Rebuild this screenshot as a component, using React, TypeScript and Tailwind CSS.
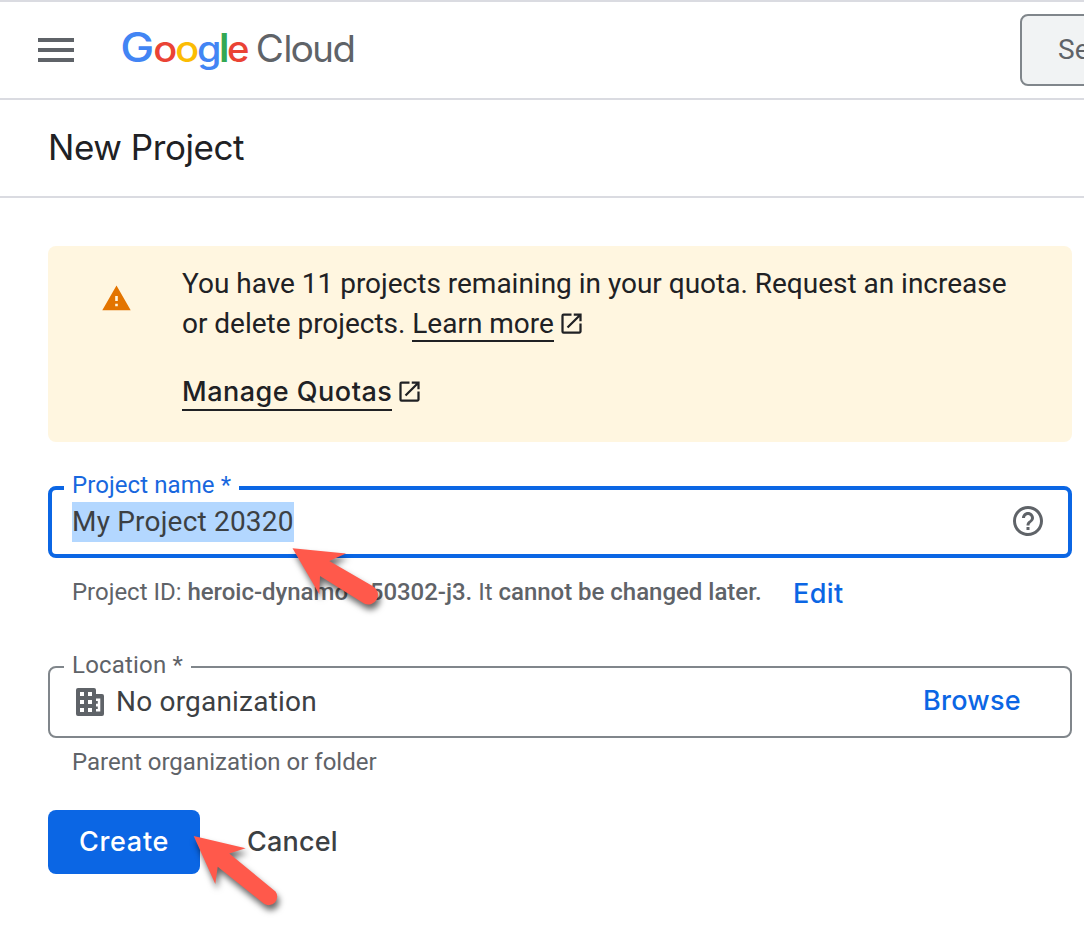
import React from "react";

function OpenInNew({ className = "" }: { className?: string }) {
  return (
    <svg viewBox="0 0 24 24" className={`inline-block h-[27px] w-[27px] ${className}`} fill="currentColor">
      <path d="M19 19H5V5h7V3H5a2 2 0 0 0-2 2v14a2 2 0 0 0 2 2h14c1.1 0 2-.9 2-2v-7h-2v7zM14 3v2h3.59l-9.83 9.83 1.41 1.41L19 6.41V10h2V3h-7z" />
    </svg>
  );
}

function Arrow({ d, className }: { d: string; className: string }) {
  return (
    <svg viewBox="0 0 100 90" className={`pointer-events-none absolute h-[90px] w-[100px] overflow-visible drop-shadow-[2px_5px_3px_rgba(0,0,0,0.6)] ${className}`}>
      <path d={d} fill="#ff594b" />
    </svg>
  );
}

function Header() {
  return (
    <header className="flex h-[100px] items-center overflow-hidden border-y-2 border-[#dadbe1] pl-[38px]">
      <div className="flex w-9 shrink-0 flex-col gap-[6px]">
        <span className="h-1 bg-[#5f6368]" />
        <span className="h-1 bg-[#5f6368]" />
        <span className="h-1 bg-[#5f6368]" />
      </div>
      <svg viewBox="0 0 240 60" className="ml-[46px] h-[60px] w-[240px] shrink-0 font-['Inter',sans-serif]">
        <g fontSize="36.500" fontWeight="500">
          <text x="0.300" y="41.500" fontSize="41" textLength="34" lengthAdjust="spacingAndGlyphs" fill="#4285f4">G</text>
          <text x="33.300" y="41.500" textLength="24" lengthAdjust="spacingAndGlyphs" fill="#ea4335">o</text>
          <text x="55.300" y="41.500" textLength="24" lengthAdjust="spacingAndGlyphs" fill="#fbbc04">o</text>
          <text x="77" y="41.500" textLength="24.500" lengthAdjust="spacingAndGlyphs" fill="#4285f4">g</text>
          <text x="98.900" y="41.500" fontSize="40" fontWeight="600" fill="#34a853">l</text>
          <text x="107" y="41.500" textLength="22.500" lengthAdjust="spacingAndGlyphs" fill="#ea4335">e</text>
        </g>
        <g fontSize="36.500" fill="#5f6368">
          <text x="135.700" y="41.500" fontSize="38.500">C</text>
          <text x="163.500" y="41.500">l</text>
          <text x="170.500" y="41.500" textLength="23.500" lengthAdjust="spacingAndGlyphs">o</text>
          <text x="192.300" y="41.500">u</text>
          <text x="212.500" y="41.500" textLength="23.500" lengthAdjust="spacingAndGlyphs">d</text>
        </g>
      </svg>
      <div className="ml-[660px] flex h-[72px] w-[300px] shrink-0 items-center rounded-lg border-2 border-[#80868b] bg-[#f1f3f4] pl-9 text-[28px] text-[#5f6368]">
        Search
      </div>
    </header>
  );
}

export default function App() {
  return (
    <div className="relative h-[944px] w-[1084px] overflow-hidden bg-white font-['Roboto',sans-serif] text-[#202124]">
      <Header />
      <div className="flex h-[98px] items-center border-b-2 border-[#dadbe1] pb-[2px] pl-12 font-['Inter',sans-serif] text-[35px]">
        <h1 className="tracking-[-0.45px]">New Project</h1>
      </div>

      <main className="px-12 pt-12">
        <section className="flex h-[196px] w-[1024px] rounded-lg bg-[#fff6e0] pt-[18px] text-[28px] leading-10">
          <svg viewBox="0 0 24 24" className="ml-[53px] mt-[19px] h-[31px] w-[31px] shrink-0">
            <path fill="#e37400" d="M1 21h22L12 2 1 21zm12-3h-2v-2h2v2zm0-4h-2v-4h2v4z" />
          </svg>
          <div className="ml-[50px] whitespace-nowrap">
            <p className="tracking-[-0.01px]">You have 11 projects remaining in your quota. Request an increase</p>
            <p className="flex tracking-[-0.02px]">
              <span>or delete projects.&nbsp;</span>
              <a className="h-[38px] border-b-2 border-[#202124]">Learn more</a>
              <OpenInNew className="ml-1 mt-[6px]" />
            </p>
            <p className="mt-7 flex font-['Inter',sans-serif] text-[27px] font-medium">
              <a className="h-[39px] w-[210px] border-b-2 border-[#202124] tracking-[0.5px]">Manage Quotas</a>
              <OpenInNew className="ml-[4px] mt-[6px]" />
            </p>
          </div>
        </section>

        <div className="relative mt-11 flex h-[72px] w-[1024px] items-center justify-between rounded-lg border-4 border-[#0b66e4] pl-5 pr-[22px]">
          <label className="absolute -top-[19px] left-3 bg-white px-2 text-2xl leading-7 tracking-[0.08px] text-[#1867de]">Project name *</label>
          <span className="bg-[#b3d7ff] text-[28px] leading-10 tracking-[0.2px] text-[#3c4043]">My Project 20320</span>
          <svg viewBox="0 0 24 24" className="mb-[2px] h-9 w-9" fill="#5f6368">
            <path d="M11 18h2v-2h-2v2zm1-16C6.48 2 2 6.48 2 12s4.480 10 10 10 10-4.480 10-10S17.520 2 12 2zm0 18c-4.410 0-8-3.590-8-8s3.590-8 8-8 8 3.590 8 8-3.590 8-8 8zm0-14c-2.210 0-4 1.790-4 4h2c0-1.100.900-2 2-2s2 .900 2 2c0 2-3 1.750-3 5h2c0-2.250 3-2.500 3-5 0-2.210-1.790-4-4-4z" />
          </svg>
        </div>
        <div className="flex h-[72px] items-center whitespace-nowrap pl-6 text-2xl text-[#5f6368]">
          <p className="w-[689px] pb-[5px] tracking-[-0.02px]">
            Project ID: <b className="font-medium">heroic-dynamo-450302-j3.</b> It <b className="font-medium">cannot be changed later.</b>
          </p>
          <a className="ml-8 font-['Inter',sans-serif] text-[27px] font-medium tracking-[0.4px] text-[#0b66e4]">Edit</a>
        </div>

        <div className="relative mt-9 flex h-[72px] w-[1024px] items-center rounded-lg border-2 border-[#80868b] pl-[26px] pr-[49px]">
          <label className="absolute -top-[17px] left-[14px] bg-white px-2 text-2xl leading-7 tracking-[0.2px] text-[#5f6368]">Location *</label>
          <svg viewBox="0 0 28 28" className="h-7 w-7" fill="#5f6368" fillRule="evenodd">
            <path d="M2 0H18Q20 0 20 2V6H26Q28 6 28 8V26Q28 28 26 28H2Q0 28 0 26V2Q0 0 2 0ZM4 4V8H8V4ZM12 4V8H16V4ZM4 12V16H8V12ZM12 12V16H16V12ZM4 20V24H8V20ZM12 20V24H16V20ZM20 10.500H24.300V23.500H20V21H21.800V18.500H20V15.700H21.800V13H20Z" />
          </svg>
          <span className="ml-3 text-[28px] tracking-[0.2px] text-[#3c4043]">No organization</span>
          <a className="ml-auto pb-[2px] font-['Inter',sans-serif] text-[27px] font-medium tracking-[0.3px] text-[#0b66e4]">Browse</a>
        </div>
        <p className="mt-2 pl-6 text-2xl leading-8 text-[#5f6368]">Parent organization or folder</p>

        <div className="mt-8 flex items-center font-['Inter',sans-serif] text-[27px] font-medium">
          <button className="h-16 w-[152px] rounded-lg bg-[#0b66e4] pt-px tracking-[0.7px] text-white">Create</button>
          <button className="ml-[47px] pt-px tracking-[0.2px] text-[#3c4043]">Cancel</button>
        </div>
      </main>

      <Arrow className="left-[280px] top-[535px]" d="M12.500 13.300L66 18.500L49.300 26L92.500 51A9.300 9.300 0 0 1 84 68.500L40 41L39.300 59.300Z" />
      <Arrow className="left-[180px] top-[830px]" d="M13.700 6L65.700 18.300L49.300 23.500L95.500 61.500A8.500 8.500 0 0 1 84 73.700L37.700 36.700L35.300 54Z" />
    </div>
  );
}
